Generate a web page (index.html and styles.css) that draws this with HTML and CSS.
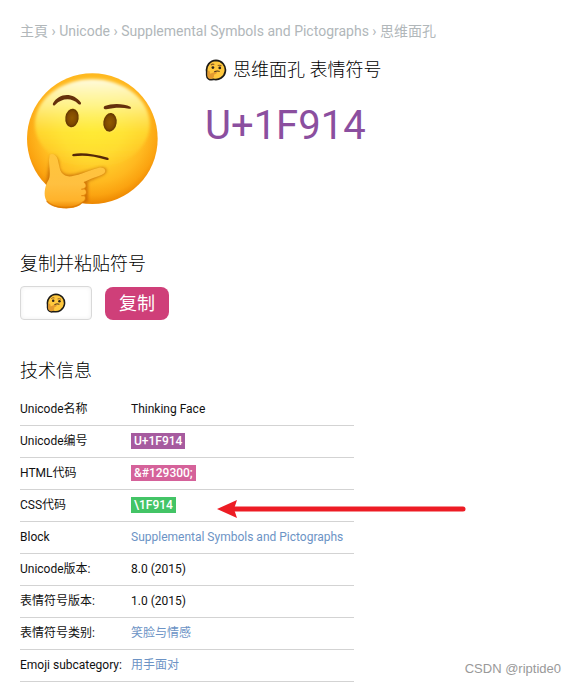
FILE: index.html
```html
<!DOCTYPE html>
<html lang="zh-Hans">
<head>
<meta charset="utf-8">
<meta name="viewport" content="width=device-width, initial-scale=1">
<title>思维面孔 表情符号</title>
<link rel="stylesheet" href="styles.css">
</head>
<body>
<svg class="defs" aria-hidden="true">
  <symbol id="glyph" viewBox="0 0 64 64">
    <path d="M32 4A28 28 0 1 1 24 59C14 63 5 57 5 47V37A28 28 0 0 1 32 4Z" fill="#ffc83d" stroke="#1d1b17" stroke-width="5" stroke-linejoin="round"/>
    <path d="M7 38C8 33 14 33 14 38L15 43L30 37C35 36 36 41 32 43L26 46C28 52 23 58 16 58C9 57 7 53 7 48Z" fill="#e39a30"/>
    <path d="M17 18Q22 13 27 16M37 19Q43 17 48 20" fill="none" stroke="#8a5a24" stroke-width="3"/>
    <circle cx="23" cy="25" r="4" fill="#2c211b"/><circle cx="43" cy="26" r="4" fill="#2c211b"/>
    <path d="M27 37Q35 33 43 36" fill="none" stroke="#3f2718" stroke-width="3"/>
  </symbol>
</svg>
<main class="page">
  <nav class="crumbs" aria-label="Breadcrumb">
    <a href="#">主頁</a> › <a href="#">Unicode</a> › <a href="#">Supplemental Symbols and Pictographs</a> › <span>思维面孔</span>
  </nav>

  <header class="hero">
    <svg class="face" viewBox="30 24 435 435" role="img" aria-label="思维面孔">
      <defs>
        <radialGradient id="skin" gradientUnits="userSpaceOnUse" cx="247" cy="205" r="228">
          <stop offset="0" stop-color="#ffe52e"/><stop offset=".4" stop-color="#ffd62f"/>
          <stop offset=".72" stop-color="#ffb81f"/><stop offset=".88" stop-color="#fba310"/><stop offset="1" stop-color="#ec8600"/>
        </radialGradient>
        <linearGradient id="shine" x1="0" y1="0" x2="0" y2="1">
          <stop offset="0" stop-color="#fffee8" stop-opacity=".95"/><stop offset=".3" stop-color="#fffa9c" stop-opacity=".8"/>
          <stop offset=".6" stop-color="#ffef3a" stop-opacity=".55"/><stop offset="1" stop-color="#ffe52e" stop-opacity="0"/>
        </linearGradient>
        <radialGradient id="eye"><stop offset="0" stop-color="#915a00"/><stop offset=".65" stop-color="#804b00"/><stop offset="1" stop-color="#603500"/></radialGradient>
        <linearGradient id="hand" x1="0" y1="0" x2="0" y2="1">
          <stop offset="0" stop-color="#ffc63c"/><stop offset=".55" stop-color="#ffc040"/><stop offset=".86" stop-color="#ffb22a"/><stop offset="1" stop-color="#ec8500"/>
        </linearGradient>
        <filter id="soft" x="-20%" y="-20%" width="140%" height="140%"><feGaussianBlur stdDeviation="5"/></filter>
        <clipPath id="disc"><circle cx="247" cy="236" r="196"/></clipPath>
      </defs>
      <circle cx="247" cy="236" r="196" fill="url(#skin)"/>
      <ellipse cx="247" cy="192" rx="172" ry="134" fill="url(#shine)" filter="url(#soft)"/>
      <g clip-path="url(#disc)">
        <path d="M121 290C130 280 148 288 148 318C151 342 170 347 194 343L271 322C292 320 296 335 280 345L234 365V425L170 440L105 390Z" fill="#b95c00" opacity=".65" filter="url(#soft)"/>
      </g>
      <g fill="none" stroke="#ffe35a" stroke-width="3" opacity=".7">
        <ellipse cx="187" cy="175" rx="22" ry="29"/><ellipse cx="301" cy="188" rx="22" ry="29"/>
      </g>
      <ellipse cx="186" cy="174" rx="20" ry="28" transform="rotate(8 186 174)" fill="url(#eye)"/>
      <ellipse cx="300" cy="187" rx="20" ry="28" transform="rotate(8 300 187)" fill="url(#eye)"/>
      <path d="M129 130C145 100 188 94 213 128C214 134 209 135 205 132C184 111 155 115 136 134C131 139 127 136 129 130Z" fill="#65300b"/>
      <path d="M284 138C306 129 341 130 361 140C365 144 362 148 357 146C334 141 310 143 289 148C281 149 279 142 284 138Z" fill="#65300b"/>
      <path d="M189 282C213 276 250 281 294 293C298 296 296 301 291 300C253 288 220 284 191 289C186 289 185 284 189 282Z" fill="#552708"/>
      <path d="M119 285C126 278 139 284 143 298C150 324 148 344 174 349C193 351 229 334 267 323C281 320 290 330 284 338C278 346 248 352 222 366C230 371 232 382 223 386C233 391 232 403 223 406C231 414 226 423 218 427C208 443 183 446 161 445C133 443 112 434 106 415C101 396 106 375 116 359C123 347 117 319 117 299Z" fill="url(#hand)"/>
      <path d="M222 366C230 371 232 382 223 386C233 391 232 403 223 406C231 414 226 423 218 427M214 388L224 386M214 407L224 406M110 423C130 448 193 449 219 426" fill="none" stroke="#d87600" stroke-width="4" opacity=".7"/>
    </svg>
    <div class="summary">
      <h1><svg class="glyph"><use href="#glyph"/></svg> 思维面孔 表情符号</h1>
      <p class="code">U+1F914</p>
    </div>
  </header>

  <section class="copy">
    <h2>复制并粘贴符号</h2>
    <div class="copy-row">
      <label class="field"><input type="text" readonly aria-label="符号"><svg class="glyph"><use href="#glyph"/></svg></label>
      <button type="button">复制</button>
    </div>
  </section>

  <section>
    <h2>技术信息</h2>
    <table>
      <tr><th scope="row">Unicode名称</th><td>Thinking Face</td></tr>
      <tr><th scope="row">Unicode编号</th><td><span class="tag purple">U+1F914</span></td></tr>
      <tr><th scope="row">HTML代码</th><td><span class="tag pink">&amp;#129300;</span></td></tr>
      <tr><th scope="row">CSS代码</th><td class="pointed"><span class="tag green">\1F914</span>
        <svg class="arrow" viewBox="0 0 250 20" aria-hidden="true"><path d="M18 10H246" stroke="#ed1c24" stroke-width="5" stroke-linecap="round"/><path d="M0 10L20 1L17 10L20 19Z" fill="#ed1c24"/></svg></td></tr>
      <tr><th scope="row">Block</th><td><a href="#">Supplemental Symbols and Pictographs</a></td></tr>
      <tr><th scope="row">Unicode版本:</th><td>8.0 (2015)</td></tr>
      <tr><th scope="row">表情符号版本:</th><td>1.0 (2015)</td></tr>
      <tr><th scope="row">表情符号类别:</th><td><a href="#">笑脸与情感</a></td></tr>
      <tr><th scope="row">Emoji subcategory:</th><td><a href="#">用手面对</a></td></tr>
    </table>
  </section>
</main>
<div class="watermark">CSDN @riptide0</div>
</body>
</html>
```
FILE: styles.css
```css
* { box-sizing: border-box; }
body {
  margin: 0;
  position: relative;
  background: #fff;
  color: #111;
  font-family: Roboto, "Noto Sans CJK SC", sans-serif;
  font-size: 12px;
}
a { color: inherit; text-decoration: none; }
.defs { position: absolute; width: 0; height: 0; }
.page { padding: 20px 20px 3px; }
.crumbs { color: #b1b7ba; font-size: 14px; line-height: 22px; }
.hero { display: flex; gap: 40px; margin-top: 26px; }
.face { flex: none; width: 145px; height: 145px; }
.summary { margin-top: -12px; }
h1, h2 { margin: 0; color: #000; font-size: 18px; font-weight: 300; line-height: 28px; }
h1 { display: flex; align-items: center; gap: 6px; }
.glyph { width: 22px; height: 22px; flex: none; }
.code { margin: 17px 0 0; color: #8b4f9f; font-size: 40px; line-height: 50px; }
.copy { margin: 37px 0 37px; }
.copy-row { display: flex; align-items: flex-end; gap: 13px; margin-top: 8px; }
.field { position: relative; display: block; width: 72px; height: 34px; }
.field input {
  width: 100%;
  height: 100%;
  border: 1px solid #d9d9d9;
  border-radius: 4px;
  background: #fff;
  box-shadow: inset 0 0 4px #eee;
}
.field .glyph { position: absolute; inset: 0; margin: auto; width: 20px; height: 20px; }
button {
  height: 33px;
  padding: 0 14px;
  border: 0;
  border-radius: 8px;
  background: #cf3f79;
  color: #fff;
  font: 400 18px/30px Roboto, "Noto Sans CJK SC", sans-serif;
}
table { width: 334px; max-width: 100%; margin-top: 8px; border-collapse: collapse; }
th, td { height: 32px; padding: 0; border-bottom: 1px solid #d3d3d3; font-weight: 400; line-height: 16px; text-align: left; white-space: nowrap; }
th { width: 111px; }
td a { color: #6c93c5; }
.tag { display: inline-block; padding: 0 3px; color: #fff; font-weight: 500; }
.purple { background: #a65b9f; }
.pink { background: #d5629a; }
.green { background: #43c466; }
.pointed { position: relative; }
.arrow { position: absolute; left: 86px; top: 9px; width: 250px; height: 20px; }
.watermark { position: absolute; right: 14px; bottom: 7px; color: #999; font: 13px/18px "Liberation Sans", sans-serif; }
```
